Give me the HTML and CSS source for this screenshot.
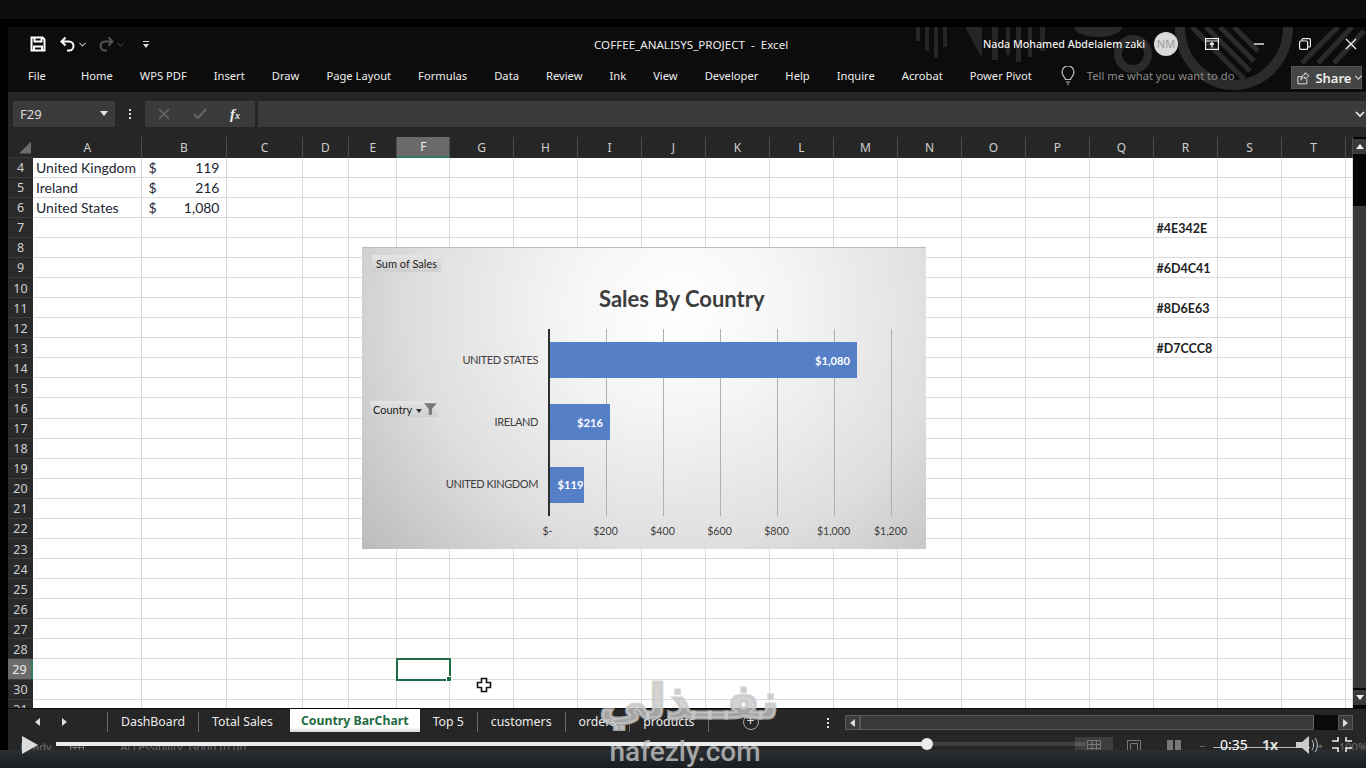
FILE: index.html
```html
<!DOCTYPE html>
<html lang="en">

<head>
    <meta charset="UTF-8">
    <meta name="viewport" content="width=device-width, initial-scale=1.0">
    <title>COFFEE_ANALISYS_PROJECT - Excel</title>
    <link rel="stylesheet" href="styles.css">
</head>

<body>
    <div class="top-strip"></div>

    <div class="window">
        <div class="head">
            <svg class="title-art" width="456" height="65" viewBox="0 0 456 65">
                <g fill="#262626">
                    <rect x="6" y="0" width="4" height="14"/><rect x="15" y="0" width="4" height="24"/>
                    <rect x="24" y="0" width="4" height="31"/><rect x="33" y="0" width="4" height="20"/>
                    <polygon points="55,0 72,0 72,31"/>
                    <rect x="82" y="0" width="6" height="33"/><rect x="96" y="0" width="4" height="28"/>
                    <rect x="106" y="0" width="5" height="35"/><rect x="118" y="0" width="4" height="30"/>
                    <rect x="130" y="0" width="5" height="24"/>
                </g>
                <path d="M164 0a24 10 0 0 0 48 0z" fill="#2a2a2a"/>
                <circle cx="223" cy="27" r="15" fill="none" stroke="#2b2b2b" stroke-width="8"/>
                <path d="M270 0a54 58 0 0 0 108 0" fill="none" stroke="#2b2b2b" stroke-width="10"/>
                <g stroke="#2b2b2b" stroke-width="5">
                    <path d="M282 0l52 52M296 0l44 44M310 0l34 34M324 0l24 24"/>
                    <path d="M392 36l36-36M408 36l34-36M424 36l30-32"/>
                </g>
            </svg>
            <div class="titlebar">
                <div class="qat">
                    <svg class="qat-save" width="16" height="16" viewBox="0 0 16 16" fill="none" stroke="#fff" stroke-width="2">
                        <path d="M1.5 1.5h11l2 2v11h-13z"/><path d="M4.5 1.5v4h7v-4M4 14.5v-4h8v4"/>
                    </svg>
                    <svg class="qat-undo" width="16" height="16" viewBox="0 0 16 16" fill="none" stroke="#fff" stroke-width="2">
                        <path d="M5.5 1.5l-4 4 4 4"/><path d="M2 5.5h7a4.5 4.5 0 0 1 0 9H7"/>
                    </svg>
                    <span class="caret-sm"></span>
                    <svg class="qat-redo" width="16" height="16" viewBox="0 0 16 16" fill="none" stroke="#555" stroke-width="2">
                        <path d="M10.5 1.5l4 4-4 4"/><path d="M14 5.5H7a4.5 4.5 0 0 0 0 9h2"/>
                    </svg>
                    <span class="caret-sm dim"></span>
                    <span class="qat-more"></span>
                </div>
                <div class="doc-title">COFFEE_ANALISYS_PROJECT &nbsp;-&nbsp; Excel</div>
                <div class="user-name">Nada Mohamed Abdelalem zaki</div>
                <div class="avatar">NM</div>
                <div class="win-btns">
                    <svg width="14" height="12" viewBox="0 0 14 12" fill="none" stroke="#eee" stroke-width="1.2">
                        <rect x="0.6" y="0.6" width="12.8" height="10.8"/><path d="M0.6 3h12.8M7 9.5V4.5M5 6.5l2-2 2 2"/>
                    </svg>
                    <svg width="12" height="12" viewBox="0 0 12 12" stroke="#eee" stroke-width="1.4"><path d="M1 6h10"/></svg>
                    <svg width="12" height="12" viewBox="0 0 12 12" fill="none" stroke="#eee" stroke-width="1.2">
                        <rect x="0.6" y="3" width="8" height="8.4" rx="1"/><path d="M3 3V1.6a1 1 0 0 1 1-1h6.4a1 1 0 0 1 1 1V8a1 1 0 0 1-1 1H8.6"/>
                    </svg>
                    <svg width="12" height="12" viewBox="0 0 12 12" stroke="#eee" stroke-width="1.3"><path d="M1 1l10 10M11 1L1 11"/></svg>
                </div>
            </div>

            <div class="ribbon">
                <span class="file-tab">File</span><span>Home</span><span>WPS PDF</span><span>Insert</span><span>Draw</span>
                <span>Page Layout</span><span>Formulas</span><span>Data</span><span>Review</span><span>Ink</span>
                <span>View</span><span>Developer</span><span>Help</span><span>Inquire</span><span>Acrobat</span>
                <span>Power Pivot</span>
                <div class="tell-me">
                    <svg width="16" height="19" viewBox="0 0 16 19" fill="none" stroke="#bbb" stroke-width="1.2">
                        <path d="M5.5 13.5c0-2-3.5-3.5-3.5-7.5a6 6 0 0 1 12 0c0 4-3.5 5.5-3.5 7.5z"/><path d="M6 16h4M7 18h2"/>
                    </svg>
                    <span>Tell me what you want to do</span>
                </div>
                <div class="share">
                    <svg width="15" height="14" viewBox="0 0 15 14" fill="none" stroke="#ddd" stroke-width="1.1">
                        <path d="M1 5.5h5M1 5.5v8h10V8M9 1l4.5 3.5L9 8V6C6.5 6 5 7.5 4.5 9.500 4.500 6 6 3 9 3z"/>
                    </svg>
                    <b>Share</b>
                    <span class="caret-sm"></span>
                </div>
            </div>
        </div>

        <div class="formula-bar">
            <div class="name-box">F29<span class="caret-down"></span></div>
            <div class="dots"><i></i><i></i><i></i></div>
            <div class="fx-group">
                <svg width="12" height="12" viewBox="0 0 12 12" stroke="#666" stroke-width="1.6"><path d="M1 1l10 10M11 1L1 11"/></svg>
                <svg width="14" height="12" viewBox="0 0 14 12" fill="none" stroke="#666" stroke-width="2"><path d="M1 6l4 4 8-9"/></svg>
                <span class="fx">f<small>x</small></span>
            </div>
            <div class="formula-input">
                <svg width="10" height="7" viewBox="0 0 10 7" fill="none" stroke="#eee" stroke-width="1.6"><path d="M1 1l4 4 4-4"/></svg>
            </div>
        </div>

        <div class="sheet-area">
            <div class="sheet">
                <b class="corner"></b><u>A</u><u>B</u><u>C</u><u>D</u><u>E</u><u class="active">F</u><u>G</u><u>H</u><u>I</u><u>J</u><u>K</u><u>L</u><u>M</u><u>N</u><u>O</u><u>P</u><u>Q</u><u>R</u><u>S</u><u>T</u><u></u>
                <b>4</b><i>United Kingdom</i><i class="money"><span>$</span><span>119</span></i><i></i><i></i><i></i><i></i><i></i><i></i><i></i><i></i><i></i><i></i><i></i><i></i><i></i><i></i><i></i><i></i><i></i><i></i><i></i>
                <b>5</b><i>Ireland</i><i class="money"><span>$</span><span>216</span></i><i></i><i></i><i></i><i></i><i></i><i></i><i></i><i></i><i></i><i></i><i></i><i></i><i></i><i></i><i></i><i></i><i></i><i></i><i></i>
                <b>6</b><i>United States</i><i class="money"><span>$</span><span>1,080</span></i><i></i><i></i><i></i><i></i><i></i><i></i><i></i><i></i><i></i><i></i><i></i><i></i><i></i><i></i><i></i><i></i><i></i><i></i><i></i>
                <b>7</b><i></i><i></i><i></i><i></i><i></i><i></i><i></i><i></i><i></i><i></i><i></i><i></i><i></i><i></i><i></i><i></i><i></i><i class="hex">#4E342E</i><i></i><i></i><i></i>
                <b>8</b><i></i><i></i><i></i><i></i><i></i><i></i><i></i><i></i><i></i><i></i><i></i><i></i><i></i><i></i><i></i><i></i><i></i><i></i><i></i><i></i><i></i>
                <b>9</b><i></i><i></i><i></i><i></i><i></i><i></i><i></i><i></i><i></i><i></i><i></i><i></i><i></i><i></i><i></i><i></i><i></i><i class="hex">#6D4C41</i><i></i><i></i><i></i>
                <b>10</b><i></i><i></i><i></i><i></i><i></i><i></i><i></i><i></i><i></i><i></i><i></i><i></i><i></i><i></i><i></i><i></i><i></i><i></i><i></i><i></i><i></i>
                <b>11</b><i></i><i></i><i></i><i></i><i></i><i></i><i></i><i></i><i></i><i></i><i></i><i></i><i></i><i></i><i></i><i></i><i></i><i class="hex">#8D6E63</i><i></i><i></i><i></i>
                <b>12</b><i></i><i></i><i></i><i></i><i></i><i></i><i></i><i></i><i></i><i></i><i></i><i></i><i></i><i></i><i></i><i></i><i></i><i></i><i></i><i></i><i></i>
                <b>13</b><i></i><i></i><i></i><i></i><i></i><i></i><i></i><i></i><i></i><i></i><i></i><i></i><i></i><i></i><i></i><i></i><i></i><i class="hex">#D7CCC8</i><i></i><i></i><i></i>
                <b>14</b><i></i><i></i><i></i><i></i><i></i><i></i><i></i><i></i><i></i><i></i><i></i><i></i><i></i><i></i><i></i><i></i><i></i><i></i><i></i><i></i><i></i>
                <b>15</b><i></i><i></i><i></i><i></i><i></i><i></i><i></i><i></i><i></i><i></i><i></i><i></i><i></i><i></i><i></i><i></i><i></i><i></i><i></i><i></i><i></i>
                <b>16</b><i></i><i></i><i></i><i></i><i></i><i></i><i></i><i></i><i></i><i></i><i></i><i></i><i></i><i></i><i></i><i></i><i></i><i></i><i></i><i></i><i></i>
                <b>17</b><i></i><i></i><i></i><i></i><i></i><i></i><i></i><i></i><i></i><i></i><i></i><i></i><i></i><i></i><i></i><i></i><i></i><i></i><i></i><i></i><i></i>
                <b>18</b><i></i><i></i><i></i><i></i><i></i><i></i><i></i><i></i><i></i><i></i><i></i><i></i><i></i><i></i><i></i><i></i><i></i><i></i><i></i><i></i><i></i>
                <b>19</b><i></i><i></i><i></i><i></i><i></i><i></i><i></i><i></i><i></i><i></i><i></i><i></i><i></i><i></i><i></i><i></i><i></i><i></i><i></i><i></i><i></i>
                <b>20</b><i></i><i></i><i></i><i></i><i></i><i></i><i></i><i></i><i></i><i></i><i></i><i></i><i></i><i></i><i></i><i></i><i></i><i></i><i></i><i></i><i></i>
                <b>21</b><i></i><i></i><i></i><i></i><i></i><i></i><i></i><i></i><i></i><i></i><i></i><i></i><i></i><i></i><i></i><i></i><i></i><i></i><i></i><i></i><i></i>
                <b>22</b><i></i><i></i><i></i><i></i><i></i><i></i><i></i><i></i><i></i><i></i><i></i><i></i><i></i><i></i><i></i><i></i><i></i><i></i><i></i><i></i><i></i>
                <b>23</b><i></i><i></i><i></i><i></i><i></i><i></i><i></i><i></i><i></i><i></i><i></i><i></i><i></i><i></i><i></i><i></i><i></i><i></i><i></i><i></i><i></i>
                <b>24</b><i></i><i></i><i></i><i></i><i></i><i></i><i></i><i></i><i></i><i></i><i></i><i></i><i></i><i></i><i></i><i></i><i></i><i></i><i></i><i></i><i></i>
                <b>25</b><i></i><i></i><i></i><i></i><i></i><i></i><i></i><i></i><i></i><i></i><i></i><i></i><i></i><i></i><i></i><i></i><i></i><i></i><i></i><i></i><i></i>
                <b>26</b><i></i><i></i><i></i><i></i><i></i><i></i><i></i><i></i><i></i><i></i><i></i><i></i><i></i><i></i><i></i><i></i><i></i><i></i><i></i><i></i><i></i>
                <b>27</b><i></i><i></i><i></i><i></i><i></i><i></i><i></i><i></i><i></i><i></i><i></i><i></i><i></i><i></i><i></i><i></i><i></i><i></i><i></i><i></i><i></i>
                <b>28</b><i></i><i></i><i></i><i></i><i></i><i></i><i></i><i></i><i></i><i></i><i></i><i></i><i></i><i></i><i></i><i></i><i></i><i></i><i></i><i></i><i></i>
                <b class="active">29</b><i></i><i></i><i></i><i></i><i></i><i class="selected"></i><i></i><i></i><i></i><i></i><i></i><i></i><i></i><i></i><i></i><i></i><i></i><i></i><i></i><i></i><i></i>
                <b>30</b><i></i><i></i><i></i><i></i><i></i><i></i><i></i><i></i><i></i><i></i><i></i><i></i><i></i><i></i><i></i><i></i><i></i><i></i><i></i><i></i><i></i>
                <b>31</b><i></i><i></i><i></i><i></i><i></i><i></i><i></i><i></i><i></i><i></i><i></i><i></i><i></i><i></i><i></i><i></i><i></i><i></i><i></i><i></i><i></i>
            </div>

            <div class="vscroll">
                <div class="vs-btn"><span class="tri-up"></span></div>
                <div class="vs-track"><div class="vs-thumb"></div></div>
                <div class="vs-btn"><span class="tri-down"></span></div>
            </div>

            <div class="chart">
                <div class="field-btn sum-field">Sum of Sales</div>
                <div class="field-btn country-field">Country
                    <span class="tri-down dark"></span>
                    <svg width="13" height="12" viewBox="0 0 12 11" fill="#777"><path d="M0 0h12L7.500 5.500V11h-3V5.500z"/></svg>
                </div>
                <div class="chart-title">Sales By Country</div>
                <div class="chart-body">
                    <div class="cat-labels">
                        <span>UNITED STATES</span>
                        <span>IRELAND</span>
                        <span>UNITED KINGDOM</span>
                    </div>
                    <div class="plot">
                        <div class="bar-row"><div class="bar" style="width: 307px">$1,080</div></div>
                        <div class="bar-row"><div class="bar" style="width: 60px">$216</div></div>
                        <div class="bar-row"><div class="bar tight" style="width: 33.500px">$119</div></div>
                    </div>
                </div>
                <div class="axis">
                    <span class="zero">$-</span><span>$200</span><span>$400</span><span>$600</span><span>$800</span><span>$1,000</span><span>$1,200</span>
                </div>
            </div>

            <svg class="cell-cursor" width="16" height="16" viewBox="0 0 16 16" fill="#fff" stroke="#111" stroke-width="1.600">
                <path d="M5.500 1.500h5v4h4v5h-4v4h-5v-4h-4v-5h4z"/>
            </svg>
        </div>

        <div class="sheet-tabs">
            <div class="tab-nav">
                <span class="tri-left"></span>
                <span class="tri-right"></span>
            </div>
            <div class="tab">DashBoard</div>
            <div class="tab">Total Sales</div>
            <div class="tab current">Country BarChart</div>
            <div class="tab">Top 5</div>
            <div class="tab">customers</div>
            <div class="tab">orders</div>
            <div class="tab last">products</div>
            <div class="add-sheet">+</div>
            <div class="dots tabs-dots"><i></i><i></i><i></i></div>
            <div class="hscroll">
                <div class="hs-btn"><span class="tri-left"></span></div>
                <div class="hs-thumb"></div>
                <div class="hs-gap"></div>
                <div class="hs-btn"><span class="tri-right"></span></div>
            </div>
        </div>

        <div class="statusbar">
            <span class="ready">Ready</span>
            <svg class="macro" width="14" height="12" viewBox="0 0 14 12" fill="none" stroke="#777"><path d="M.5 2.500h13v9H.5zM.5 6.500h13M5 2.500v9M9.500 2.500v9"/></svg>
            <span class="access">Accessibility: Good to go</span>
            <div class="views">
                <svg class="on" width="14" height="13" viewBox="0 0 14 13" fill="none" stroke="#777"><path d="M.5.500h13v12H.5zM.5 4.500h13M.5 8.500h13M5 .5v12M9.500.5v12"/></svg>
                <svg width="14" height="13" viewBox="0 0 14 13" fill="none" stroke="#777"><path d="M.5.500h13v12H.5zM3.500 3.500h7v9h-7z"/></svg>
                <svg width="14" height="13" viewBox="0 0 14 13" fill="#777"><path d="M0 0h6v13H0zM8 0h6v13H8z"/></svg>
            </div>
            <span class="zoom-minus">−</span>
            <span class="zoom-plus">+</span>
            <span class="zoom-level">100%</span>
        </div>
    </div>

    <!-- video player on top of the recording -->
    <div class="player">
        <div class="player-shade"></div>
        <svg class="play" width="16" height="18" viewBox="0 0 16 18" fill="#ddd"><path d="M0 0l16 9-16 9z"/></svg>
        <div class="progress"><div class="progress-done"></div></div>
        <div class="zoom-line"></div>
        <span class="time">0:35</span>
        <span class="speed">1x</span>
        <svg class="volume" width="24" height="18" viewBox="0 0 24 18"><path d="M0 6h6l7-6v18l-7-6H0z" fill="#ccc"/><path d="M16 4c2 3 2 7 0 10M19 2c3 4 3 10 0 14" fill="none" stroke="#ccc"/></svg>
        <svg class="full" width="20" height="15" viewBox="0 0 20 15" fill="none" stroke="#eee" stroke-width="1.600"><path d="M0 4h6V0M14 0v4h6M0 11h6v4M14 15v-4h6"/></svg>
    </div>

    <div class="watermark">
        <div class="wm-logo" lang="ar" dir="rtl">نفــذلي</div>
        <div class="wm-site">nafezly.com</div>
    </div>
</body>

</html>
```

FILE: styles.css
```css
* {
    margin: 0;
    padding: 0;
    box-sizing: border-box;
}

body {
    width: 1366px;
    height: 768px;
    overflow: hidden;
    position: relative;
    background: #000;
    font-family: "Noto Sans", "Open Sans", sans-serif;
    font-size: 12px;
    color: #e6e6e6;
}

.top-strip {
    height: 19px;
    margin-bottom: 8px;
    background: #0d0d0d;
}

.window {
    width: 1358px;
    height: 741px;
    margin-left: 8px;
    display: flex;
    flex-direction: column;
    background: #262626;
}

/* title bar */

.head {
    flex: none;
    position: relative;
    background: #0c0c0c;
}

.titlebar {
    height: 36px;
    display: flex;
    align-items: center;
    position: relative;
    padding-bottom: 2px;
}

.title-art {
    position: absolute;
    left: 902px;
    top: 0;
}

.qat {
    display: flex;
    align-items: center;
    width: 300px;
    padding-left: 22px;
}

.qat-undo {
    margin-left: 14px;
}

.qat .caret-sm {
    margin-left: 4px;
}

.qat-redo {
    margin-left: 13px;
}

.qat-more {
    width: 6px;
    height: 6px;
    margin-left: 20px;
    border-top: 1px solid #ddd;
    position: relative;
}

.qat-more::after {
    content: '';
    position: absolute;
    left: 0;
    top: 2px;
    border: 3px solid transparent;
    border-top: 4px solid #ddd;
}

.caret-sm {
    display: inline-block;
    width: 5px;
    height: 5px;
    border-right: 1.5px solid #ddd;
    border-bottom: 1.5px solid #ddd;
    transform: rotate(45deg) translate(-1px, -1px);
}

.caret-sm.dim {
    border-color: #444;
}

.doc-title {
    margin-left: 286px;
    width: 389px;
    font-size: 11.600px;
    color: #ececec;
}

.user-name {
    width: 171px;
    font-size: 10.700px;
    font-weight: 500;
    color: #eee;
    white-space: nowrap;
}

.avatar {
    width: 24px;
    height: 24px;
    border-radius: 50%;
    background: #d9d9d9;
    color: #999;
    font-size: 11px;
    text-align: center;
    line-height: 24px;
}

.win-btns {
    display: flex;
    align-items: center;
    margin-left: 27px;
    gap: 34px;
}

/* ribbon tabs */

.ribbon {
    height: 29px;
    display: flex;
    align-items: center;
    gap: 27px;
    padding: 0 0 5px 20px;
    position: relative;
    font-size: 11.200px;
    color: #ececec;
}

.file-tab {
    margin-right: 8px;
}

.tell-me {
    display: flex;
    align-items: center;
    gap: 11px;
    margin-left: 1px;
    color: #8a8a8a;
}

.share {
    position: absolute;
    left: 1283px;
    top: 3px;
    width: 71px;
    height: 23px;
    display: flex;
    align-items: center;
    gap: 5px;
    padding-left: 5px;
    background: #454545;
    border: 1px solid #555;
    color: #eee;
    font-size: 13px;
}

.share b {
    font-weight: 600;
}

/* formula bar */

.formula-bar {
    height: 45px;
    flex: none;
    display: flex;
    align-items: center;
    padding: 0 0 1px 5px;
    background: #262626;
}

.name-box {
    width: 102px;
    height: 26px;
    padding-left: 7px;
    position: relative;
    display: flex;
    align-items: center;
    background: #3b3b3b;
    font-size: 13px;
    color: #dcdcdc;
}

.caret-down {
    position: absolute;
    left: 87px;
    top: 10px;
    border: 4px solid transparent;
    border-top: 5px solid #e6e6e6;
}

.dots {
    width: 30px;
    display: flex;
    flex-direction: column;
    align-items: center;
    gap: 2px;
}

.dots i {
    width: 2px;
    height: 2px;
    background: #ddd;
}

.fx-group {
    width: 110px;
    height: 26px;
    display: flex;
    align-items: center;
    gap: 23px;
    padding-left: 13px;
    background: #3b3b3b;
}

.fx {
    font-family: "Liberation Serif", serif;
    font-style: italic;
    font-weight: 700;
    font-size: 15px;
    color: #eee;
}

.fx small {
    font-size: 10px;
}

.formula-input {
    flex: 1;
    height: 26px;
    margin-left: 3px;
    display: flex;
    align-items: center;
    justify-content: flex-end;
    padding-right: 1px;
    background: #3b3b3b;
}

/* sheet */

.sheet-area {
    height: 571px;
    flex: none;
    display: flex;
    position: relative;
    overflow: hidden;
    background: #262626;
}

.sheet {
    width: 1345px;
    display: grid;
    grid-template-columns: 25px 108.500px 85px 76px 46px 48.500px 52.500px repeat(14, 64px) 7px;
    grid-template-rows: 20.500px;
    grid-auto-rows: 20.080px;
    font-family: Lato, "Open Sans", sans-serif;
    background: #fff;
}

.sheet u {
    display: flex;
    align-items: center;
    justify-content: center;
    padding-left: 1px;
    background: #262626;
    border-right: 1px solid #4c4c4c;
    text-decoration: none;
    font-family: "Noto Sans", sans-serif;
    font-size: 12px;
    color: #cfcfcf;
}

.sheet u.active {
    background: #6a6a6a;
    border-bottom: 2px solid #2f7d58;
    color: #eee;
}

.sheet b {
    display: flex;
    align-items: center;
    justify-content: center;
    padding-top: 1px;
    background: #2a2a2a;
    border-bottom: 1px solid #3c3c3c;
    font-family: "Noto Sans", sans-serif;
    font-weight: 400;
    font-size: 12.500px;
    color: #cdd0d4;
}

.sheet b.active {
    background: #6b6b6b;
    border-right: 2px solid #2f7d58;
    color: #eee;
}

.sheet b.corner {
    background: #262626;
    position: relative;
}

.corner::after {
    content: '';
    position: absolute;
    right: 2px;
    bottom: 3px;
    width: 12px;
    height: 12px;
    background: #6d6d6d;
    clip-path: polygon(100% 0, 100% 100%, 0 100%);
}

.sheet i {
    display: flex;
    align-items: center;
    padding-left: 3px;
    border-right: 1px solid #dadada;
    border-bottom: 1px solid #dadada;
    font-style: normal;
    font-size: 14px;
    color: #1c2733;
    white-space: nowrap;
}

.sheet i.money {
    justify-content: space-between;
    padding: 0 6px 0 7px;
}

.sheet i.hex {
    padding-top: 2px;
    font-weight: 700;
    font-size: 12.500px;
    color: #222;
}

.sheet i.selected {
    position: relative;
    z-index: 1;
    outline: 2px solid #1f6b45;
    outline-offset: -1px;
}

.selected::after {
    content: '';
    position: absolute;
    right: -3px;
    bottom: -3px;
    width: 4px;
    height: 4px;
    background: #1f6b45;
    border: 1px solid #fff;
    box-sizing: content-box;
}

.vscroll {
    width: 13px;
    display: flex;
    flex-direction: column;
    background: #050505;
}

.vs-btn {
    height: 15px;
    margin: 2px 0 3px;
    display: flex;
    align-items: center;
    justify-content: center;
    background: #3a3a3a;
}

.vs-track {
    flex: 1;
    padding-top: 49px;
    display: flex;
}

.vs-thumb {
    flex: 1;
    background: #393939;
}

.tri-up, .tri-down, .tri-left, .tri-right {
    display: inline-block;
    border: 4px solid transparent;
}

.tri-up {
    border-bottom: 5px solid #eee;
    margin-top: -4px;
}

.tri-down {
    border-top: 5px solid #eee;
    margin-bottom: -4px;
}

.tri-down.dark {
    border: 3px solid transparent;
    border-top: 4px solid #333;
    margin-bottom: -6px;
    margin-left: 2px;
}

.tri-left {
    border-right: 5px solid #ddd;
    margin-left: -4px;
}

.tri-right {
    border-left: 5px solid #ddd;
    margin-right: -4px;
}

/* chart floats over the cells */

.chart {
    position: absolute;
    left: 354px;
    top: 110px;
    width: 564px;
    height: 302px;
    background: radial-gradient(ellipse 72% 125% at 56% 20%, #fff 0%, #f6f6f6 25%, #dedede 65%, #bcbcbc 100%);
    border-top: 1px solid #bdbdbd;
    font-family: Lato, "Open Sans", sans-serif;
    color: #404040;
}

.field-btn {
    position: absolute;
    font-size: 11px;
    color: #222;
    background: linear-gradient(#e4e4e4, #cfcfcf);
    display: flex;
    align-items: center;
}

.sum-field {
    left: 10px;
    top: 7px;
    height: 17px;
    padding: 0 3px;
    width: 69px;
    justify-content: center;
}

.country-field {
    left: 8px;
    top: 153px;
    width: 67px;
    height: 16px;
    padding-left: 3px;
    gap: 2px;
}

.chart-title {
    height: 81px;
    padding: 37px 0 0 237px;
    font-size: 22px;
    font-weight: 700;
    line-height: 28px;
    color: #3c3c3c;
    white-space: nowrap;
}

.chart-body {
    display: flex;
    height: 187px;
}

.cat-labels {
    width: 176px;
    display: flex;
    flex-direction: column;
    align-items: flex-end;
    justify-content: space-around;
    padding-bottom: 2px;
    font-size: 11px;
    letter-spacing: -0.4px;
}

.plot {
    flex: none;
    width: 344px;
    margin-left: 10px;
    border-left: 2px solid #2e2e2e;
    display: flex;
    flex-direction: column;
    background: repeating-linear-gradient(90deg, transparent 0, transparent 56px, #b0b0b0 56px, #b0b0b0 57px);
}

.bar-row {
    flex: 1;
    display: flex;
    align-items: center;
}

.bar {
    height: 36px;
    display: flex;
    align-items: center;
    justify-content: flex-end;
    padding-right: 7px;
    background: #5580c8;
    color: #fff;
    font-size: 11.200px;
    font-weight: 700;
}

.bar.tight {
    padding-right: 0;
    white-space: nowrap;
}

.axis {
    display: flex;
    margin: 9px 0 0 158px;
    font-size: 10.600px;
}

.axis span {
    width: 57px;
    text-align: center;
}

.axis .zero {
    padding-right: 2px;
}

.cell-cursor {
    position: absolute;
    left: 468px;
    top: 540px;
}

/* sheet tabs */

.sheet-tabs {
    height: 27px;
    flex: none;
    display: flex;
    align-items: center;
    position: relative;
    padding-bottom: 1px;
    background: #262626;
    border-top: 1px solid #0b0b0b;
    font-size: 12.300px;
    color: #ececec;
}

.tab-nav {
    width: 99px;
    padding-left: 27px;
    display: flex;
    gap: 22px;
}

.tab {
    height: 20px;
    padding: 0 13px;
    display: flex;
    align-items: center;
    border-left: 1px solid #6a6a6a;
    white-space: nowrap;
}

.tab.current {
    height: 23px;
    align-self: flex-start;
    padding: 0 11px;
    margin-left: 4px;
    border-left: none;
    background: linear-gradient(#fff 80%, #d5d5d5);
    color: #1f6b45;
    font-weight: 700;
}

.tab.current + .tab {
    border-left: none;
}

.tab.last {
    border-right: 1px solid #6a6a6a;
}

.add-sheet {
    width: 16px;
    height: 16px;
    margin-left: 34px;
    border: 1.500px solid #aaa;
    border-radius: 50%;
    font-size: 14px;
    line-height: 12px;
    text-align: center;
    color: #ddd;
}

.tabs-dots {
    width: 12px;
    position: absolute;
    left: 814px;
    top: 9px;
}

.hscroll {
    position: absolute;
    left: 837px;
    top: 6px;
    width: 508px;
    height: 15px;
    display: flex;
    background: #333;
}

.hs-btn {
    width: 15px;
    display: flex;
    align-items: center;
    justify-content: center;
    background: #3c3c3c;
    border: 1px solid #5a5a5a;
}

.hs-thumb {
    flex: 1;
    background: #393939;
    border: 1px solid #575757;
    border-right-color: #666;
}

.hs-gap {
    width: 24px;
    background: #0a0a0a;
}

/* status bar */

.statusbar {
    height: 33px;
    flex: none;
    display: flex;
    align-items: flex-start;
    position: relative;
    background: #262626;
    color: #6f6f6f;
    font-size: 11px;
    padding-top: 4px;
}

.ready {
    margin-left: 12px;
}

.macro {
    margin: 2px 0 0 18px;
}

.access {
    margin-left: 37px;
}

.views {
    position: absolute;
    left: 1067px;
    top: 2px;
    display: flex;
    gap: 26px;
}

.views svg {
    margin-top: 3px;
}

.views svg.on {
    box-sizing: content-box;
    padding: 3px 12px 0;
    margin: 0 -12px 0 0;
    background: #3e3e3e;
}

.zoom-minus {
    position: absolute;
    left: 1191px;
    top: 3px;
}

.zoom-plus {
    position: absolute;
    left: 1309px;
    top: 3px;
}

.zoom-level {
    position: absolute;
    left: 1331px;
    top: 4px;
}

/* video player */

.player {
    position: absolute;
    left: 0;
    right: 0;
    bottom: 0;
    height: 33px;
}

.player-shade {
    position: absolute;
    left: 0;
    right: 0;
    bottom: 0;
    height: 18px;
    background: linear-gradient(#2a2f33, #1a1d20);
}

.play {
    position: absolute;
    left: 22px;
    top: 1px;
}

.progress {
    position: absolute;
    left: 56px;
    width: 1030px;
    top: 7px;
    height: 4px;
    background: rgba(255, 255, 255, 0.12);
}

.progress-done {
    width: 871px;
    height: 4px;
    background: #ebebeb;
    position: relative;
}

.progress-done::after {
    content: '';
    position: absolute;
    right: -6px;
    top: -4px;
    width: 12px;
    height: 12px;
    border-radius: 50%;
    background: #ebebeb;
}

.zoom-line {
    position: absolute;
    left: 1213px;
    top: 12px;
    width: 97px;
    height: 1px;
    background: #bbb;
}

.time {
    position: absolute;
    left: 1220px;
    top: 0;
    font-size: 14px;
    line-height: 20px;
    color: #fff;
}

.speed {
    position: absolute;
    left: 1262px;
    top: 0;
    font-size: 14px;
    font-weight: 700;
    line-height: 20px;
    color: #ddd;
}

.volume {
    position: absolute;
    left: 1296px;
    top: 1px;
}

.full {
    position: absolute;
    left: 1332px;
    top: 2px;
}

/* watermark */

.watermark {
    position: absolute;
    left: 590px;
    top: 675px;
    width: 190px;
    text-align: center;
    color: rgba(200, 200, 200, 0.78);
}

.wm-logo {
    height: 63px;
    padding-left: 8px;
    font-family: "DejaVu Sans", sans-serif;
    font-weight: 700;
    font-size: 48px;
    line-height: 52px;
    white-space: nowrap;
    -webkit-text-stroke: 3px rgba(200, 200, 200, 0.78);
}

.wm-site {
    font-family: Roboto, sans-serif;
    font-weight: 500;
    font-size: 28px;
    line-height: 28px;
}
```
